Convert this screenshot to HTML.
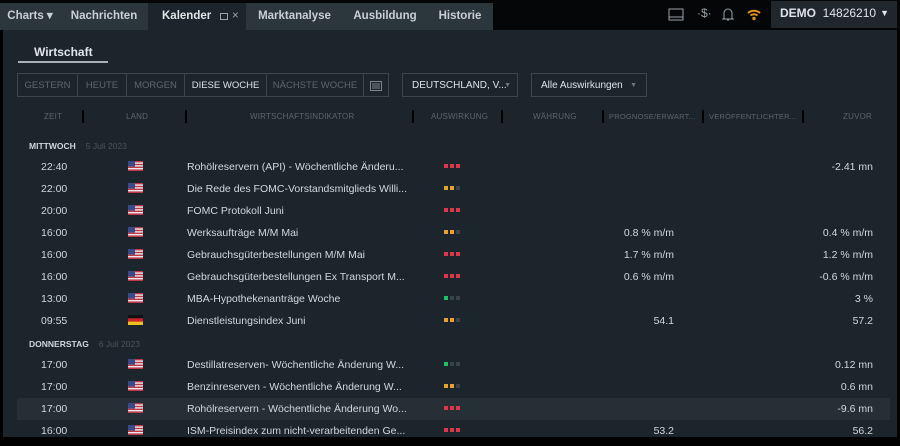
<!DOCTYPE html>
<html><head><meta charset="utf-8"><style>
*{margin:0;padding:0;box-sizing:border-box}
body{width:900px;height:446px;background:#000;font-family:"Liberation Sans",sans-serif;overflow:hidden;position:relative;color:#d8dde1}
.top{position:absolute;left:0;top:0;width:900px;height:30px;background:#050607}
.tab{position:absolute;top:3px;height:27px;line-height:27px;font-size:11.5px;font-weight:bold;color:#c9d0d5;background:#2c363d;text-align:center}
.panel{position:absolute;left:3px;top:30px;width:894px;height:408px;background:#1c252c;overflow:hidden}
.a{position:absolute;white-space:nowrap}
.btn{position:absolute;top:73px;height:24px;line-height:24px;font-size:9.5px;color:#5c666d;text-align:center;border:1px solid #3c464d;white-space:nowrap;overflow:hidden}
.hd{position:absolute;top:112px;font-size:8px;color:#5b656c;letter-spacing:.2px;white-space:nowrap}
.sep{position:absolute;top:110px;width:2px;height:13px;background:#000}
.row{position:absolute;left:17px;width:873px;height:22px;font-size:10.5px;line-height:22px;color:#d2d8dc}
.row span{position:absolute;white-space:nowrap}
.d{display:inline-block;width:4px;height:4px;margin-right:2px;vertical-align:middle}
.r{background:#e0344a}.o{background:#e8a030}.g{background:#20c060}.x{background:#39434a}
.day{position:absolute;left:29px;font-size:8.5px;font-weight:bold;color:#d0d6da}
.day i{font-style:normal;font-weight:normal;color:#4a545b;margin-left:10px}
</style></head><body>
<div class="top">
<div class="tab" style="left:0;width:60px">Charts ▾</div>
<div class="tab" style="left:60px;width:88px">Nachrichten</div>
<div class="tab" style="left:148px;width:98px;background:#1c252c;color:#e0e5e8;text-align:left;padding-left:14px">Kalender<span style="position:absolute;left:72px;top:10px;width:8px;height:7px;border:1px solid #9aa3a9"></span><span style="position:absolute;left:84px;font-weight:normal;color:#9aa3a9">×</span></div>
<div class="tab" style="left:246px;width:97px">Marktanalyse</div>
<div class="tab" style="left:343px;width:84px">Ausbildung</div>
<div class="tab" style="left:427px;width:66px">Historie</div>
<svg class="a" style="left:668px;top:8px" width="16" height="13"><rect x="1" y="1" width="14" height="11" fill="none" stroke="#9aa3a9"/><line x1="1" y1="9" x2="15" y2="9" stroke="#9aa3a9"/></svg>
<div class="a" style="left:697px;top:6px;font-size:12px;color:#9aa3a9">·$·</div>
<svg class="a" style="left:721px;top:6px" width="14" height="16"><path d="M3 12V7a4 4 0 0 1 8 0v5l1 1H2z M6 14h2" fill="none" stroke="#9aa3a9"/></svg>
<svg class="a" style="left:746px;top:7px" width="16" height="14"><path d="M2 6a9 9 0 0 1 12 0" stroke="#e09020" stroke-width="2" fill="none"/><path d="M4.5 8.5a5.5 5.5 0 0 1 7 0" stroke="#e09020" stroke-width="2" fill="none"/><circle cx="8" cy="11.5" r="1.7" fill="#e09020"/></svg>
<div class="a" style="left:771px;top:1px;width:126px;height:27px;background:#1f272d;font-size:12px;line-height:25px;padding-left:9px;color:#dfe4e7"><b>DEMO</b>&nbsp; 14826210 <span style="position:absolute;right:8px;font-size:9px">▼</span></div>
</div>
<div class="panel"></div>
<div class="a" style="left:34px;top:45px;font-size:12px;font-weight:bold;color:#e0e5e8">Wirtschaft</div>
<div class="a" style="left:18px;top:61px;width:90px;height:2px;background:#a9b1b6"></div>
<div class="btn" style="left:17px;width:61px">GESTERN</div>
<div class="btn" style="left:77px;width:50px">HEUTE</div>
<div class="btn" style="left:126px;width:59px">MORGEN</div>
<div class="btn" style="left:184px;width:83px;color:#dfe4e7">DIESE WOCHE</div>
<div class="btn" style="left:266px;width:98px">NÄCHSTE WOCHE</div>
<div class="btn" style="left:363px;width:26px"><svg width="12" height="11" style="vertical-align:middle"><rect x=".5" y="1.5" width="11" height="9" fill="none" stroke="#7a848a"/><line x1="2" y1="4" x2="10" y2="4" stroke="#7a848a"/><line x1="2" y1="6" x2="10" y2="6" stroke="#7a848a"/><line x1="2" y1="8" x2="10" y2="8" stroke="#7a848a"/></svg></div>
<div class="btn" style="left:402px;width:116px;color:#dfe4e7;text-align:left;padding-left:9px;font-size:10px">DEUTSCHLAND, V... <span style="position:absolute;right:6px;font-size:7px;color:#6a747a">▼</span></div>
<div class="btn" style="left:531px;width:116px;color:#dfe4e7;text-align:left;padding-left:9px;font-size:10px">Alle Auswirkungen <span style="position:absolute;right:9px;font-size:7px;color:#6a747a">▼</span></div>
<div class="hd" style="left:44px">ZEIT</div><div class="sep" style="left:82px"></div>
<div class="hd" style="left:126px">LAND</div><div class="sep" style="left:185px"></div>
<div class="hd" style="left:250px">WIRTSCHAFTSINDIKATOR</div><div class="sep" style="left:412px"></div>
<div class="hd" style="left:431px">AUSWIRKUNG</div><div class="sep" style="left:501px"></div>
<div class="hd" style="left:533px">WÄHRUNG</div><div class="sep" style="left:602px"></div>
<div class="hd" style="left:609px;font-size:7.5px">PROGNOSE/ERWART...</div><div class="sep" style="left:702px"></div>
<div class="hd" style="left:709px;font-size:7.5px">VERÖFFENTLICHTER...</div><div class="sep" style="left:802px"></div>
<div class="hd" style="left:843px">ZUVOR</div>
<div class="day" style="top:141px">MITTWOCH<i>5 Juli 2023</i></div>
<div class="day" style="top:339px">DONNERSTAG<i>6 Juli 2023</i></div>
<svg width="0" height="0" style="position:absolute"><defs>
<g id="us"><rect width="15" height="10" fill="#e8e8ee"/><rect y="0" width="15" height="1.4" fill="#c03848"/><rect y="2.8" width="15" height="1.4" fill="#c03848"/><rect y="5.6" width="15" height="1.4" fill="#c03848"/><rect y="8.4" width="15" height="1.6" fill="#c03848"/><rect width="7" height="5.5" fill="#3a4a88"/></g>
<g id="de"><rect width="15" height="3.4" fill="#111"/><rect y="3.3" width="15" height="3.4" fill="#d0202a"/><rect y="6.6" width="15" height="3.4" fill="#f0c020"/></g></defs></svg>
<div id="rows"></div>
<script>
var R=[[156,"22:40","us","Rohölreservern (API) - Wöchentliche Änderu...","rrr","","-2.41 mn"],
[178,"22:00","us","Die Rede des FOMC-Vorstandsmitglieds Willi...","oox","",""],
[200,"20:00","us","FOMC Protokoll Juni","rrr","",""],
[222,"16:00","us","Werksaufträge M/M Mai","oox","0.8 % m/m","0.4 % m/m"],
[244,"16:00","us","Gebrauchsgüterbestellungen M/M Mai","rrr","1.7 % m/m","1.2 % m/m"],
[266,"16:00","us","Gebrauchsgüterbestellungen Ex Transport M...","rrr","0.6 % m/m","-0.6 % m/m"],
[288,"13:00","us","MBA-Hypothekenanträge Woche","gxx","","3 %"],
[310,"09:55","de","Dienstleistungsindex Juni","oox","54.1","57.2"],
[354,"17:00","us","Destillatreserven- Wöchentliche Änderung W...","gxx","","0.12 mn"],
[376,"17:00","us","Benzinreserven - Wöchentliche Änderung W...","oox","","0.6 mn"],
[398,"17:00","us","Rohölreservern - Wöchentliche Änderung Wo...","rrr","","-9.6 mn",1],
[420,"16:00","us","ISM-Preisindex zum nicht-verarbeitenden Ge...","rrr","53.2","56.2"]];
var h="";R.forEach(function(r){var d=r[4].split("").map(function(c){return '<i class="d '+c+'"></i>'}).join("");
h+='<div class="row" style="top:'+r[0]+'px;'+(r[7]?'background:#262f36':'')+'"><span style="left:24px">'+r[1]+'</span><span style="left:111px;top:5px"><svg width="15" height="10" style="display:block"><use href="#'+r[2]+'"/></svg></span><span style="left:170px">'+r[3]+'</span><span style="left:427px;top:-1px">'+d+'</span><span style="right:216px">'+r[5]+'</span><span style="right:17px">'+r[6]+'</span></div>';});
document.getElementById("rows").innerHTML=h;
</script>
<div class="a" style="left:0;top:437px;width:900px;height:9px;background:#000"></div>
</body></html>
